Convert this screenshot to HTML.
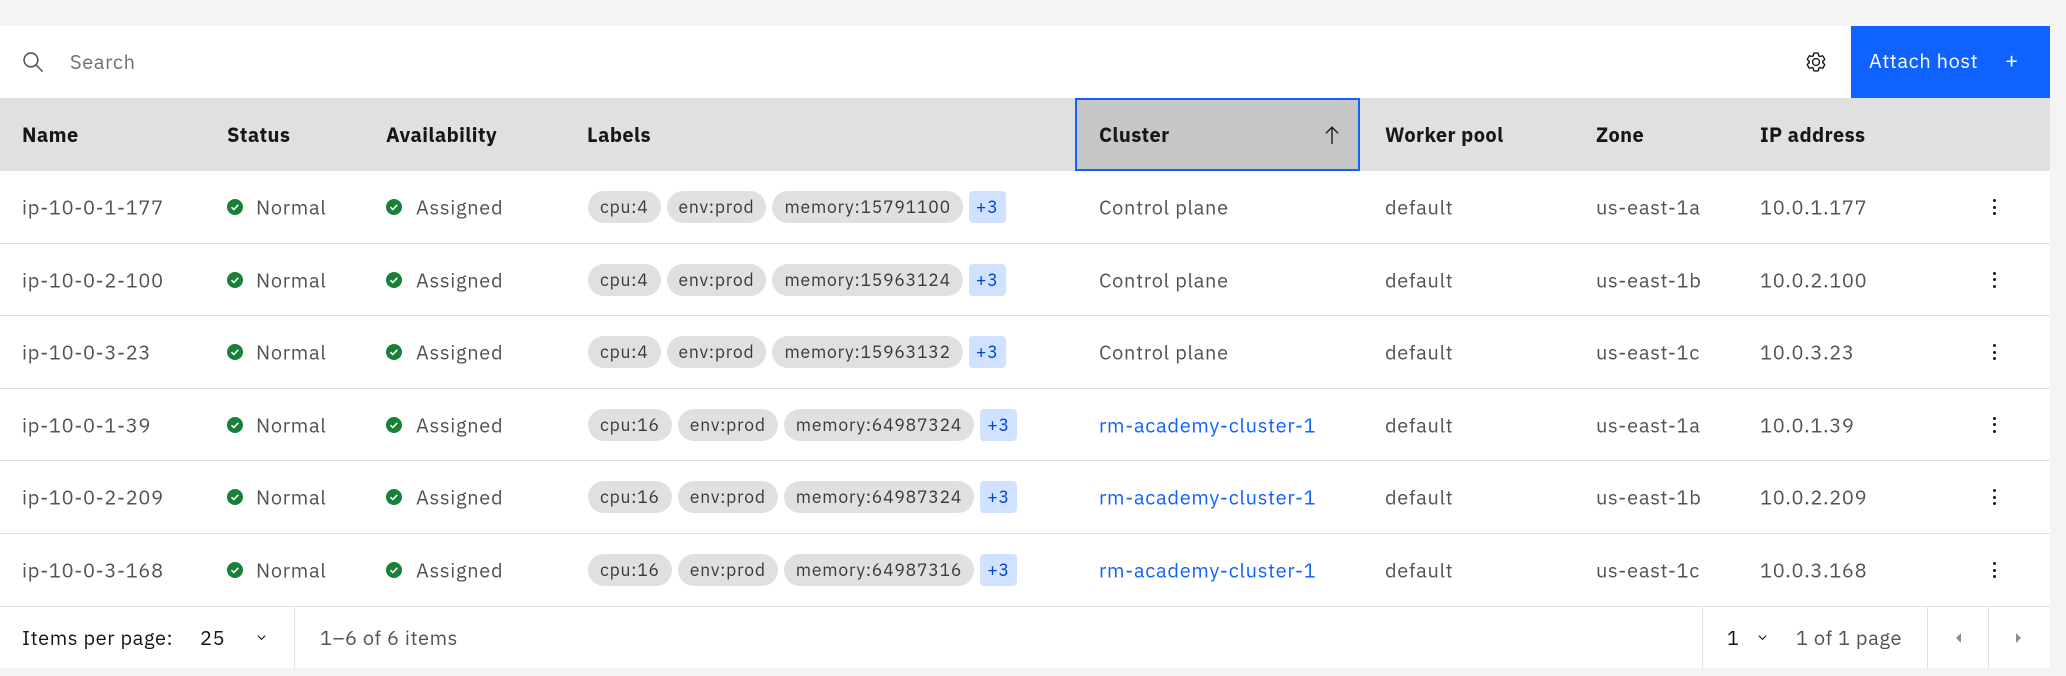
<!DOCTYPE html>
<html><head><meta charset="utf-8"><style>
*{box-sizing:border-box;margin:0;padding:0}
body{width:2066px;height:676px;background:#f4f4f4;font-family:"IBM Plex Sans","Liberation Sans",sans-serif;position:relative;overflow:hidden;color:#525252}
.abs{position:absolute}
.toolbar{left:0;top:26px;width:2050px;height:72px;background:#fff}
.hdr{left:0;top:98px;width:2050px;height:73px;background:#e0e0e0}
.th{position:absolute;top:0;height:73px;line-height:73px;font-size:20px;letter-spacing:0.4px;font-weight:bold;color:#161616}
.row{position:absolute;left:0;width:2050px;background:#fff;border-bottom:1px solid #e0e0e0}
.c{position:absolute;top:50%;transform:translateY(-50%);font-size:20px;letter-spacing:0.7px;white-space:nowrap;color:#525252}
.ok{display:inline-block;width:16px;height:16px;border-radius:50%;background:#198038;position:absolute;top:50%;transform:translateY(-50%)}
.ok svg{position:absolute;left:0;top:0}
.tags{position:absolute;left:588px;top:50%;transform:translateY(-50%);display:flex;gap:6px}
.tag{height:32px;line-height:32px;border-radius:16px;background:#e0e0e0;color:#393939;font-size:17.5px;letter-spacing:0.8px;padding:0 12px;white-space:nowrap}
.more{border-radius:4px;background:#d0e2ff;color:#0043ce;padding:0 7px}
.link{color:#0f62fe}
.kebab{position:absolute;left:1993px;top:50%;transform:translateY(-50%);width:4px;height:16px}
.kebab i{display:block;width:3px;height:3px;border-radius:50%;background:#161616;margin-bottom:3.5px}
.footer{left:0;top:607px;width:2050px;height:61px;background:#fff}
.f{position:absolute;top:0;height:61px;line-height:61px;font-size:20px;letter-spacing:0.6px;white-space:nowrap}
.sep{position:absolute;top:0;width:1px;height:61px;background:#e0e0e0}
</style></head><body>
<div class="abs" style="left:22px;top:-22px;font-size:18.5px;color:#0f62fe;white-space:nowrap">Learn more about your cluster hosts ↗</div>

<div class="abs toolbar">
  <svg class="abs" style="left:22px;top:25px" width="22" height="22" viewBox="0 0 16 16"><circle cx="6.5" cy="6.5" r="5" fill="none" stroke="#525252" stroke-width="1.1"/><path d="M10.2 10.2L15 15" stroke="#525252" stroke-width="1.1"/></svg>
  <div class="abs" style="left:70px;top:0;line-height:72px;font-size:20px;letter-spacing:0.6px;color:#6f6f6f">Search</div>
  <svg class="abs" style="left:1805px;top:25px" width="22" height="22" viewBox="0 0 32 32"><path fill="#161616" d="M27 16.76v-1.53l1.92-1.68A2 2 0 0 0 29.3 11l-2.36-4a2 2 0 0 0-2.37-.9l-2.43.82a11.35 11.35 0 0 0-1.31-.75l-.51-2.52a2 2 0 0 0-2-1.610h-4.68a2 2 0 0 0-2 1.61l-.51 2.52a11.48 11.48 0 0 0-1.32.75l-2.38-.86A2 2 0 0 0 6.79 6a2 2 0 0 0-1.73 1L2.7 11a2 2 0 0 0 .41 2.51L5 15.24v1.53l-1.89 1.68A2 2 0 0 0 2.7 21l2.36 4a2 2 0 0 0 2.37.9l2.43-.82a11.35 11.35 0 0 0 1.31.75l.51 2.52a2 2 0 0 0 2 1.61h4.72a2 2 0 0 0 2-1.61l.51-2.52a11.48 11.48 0 0 0 1.32-.75l2.42.82a2 2 0 0 0 2.37-.9l2.28-4a2 2 0 0 0-.41-2.51ZM25.21 24l-3.43-1.16a8.86 8.86 0 0 1-2.71 1.57L18.36 28h-4.72l-.71-3.55a9.36 9.36 0 0 1-2.7-1.57L6.79 24l-2.36-4 2.72-2.4a8.9 8.9 0 0 1 0-3.13L4.43 12l2.36-4 3.43 1.16a8.86 8.86 0 0 1 2.71-1.57L13.64 4h4.72l.71 3.55a9.36 9.36 0 0 1 2.7 1.57L25.21 8l2.36 4-2.72 2.4a8.9 8.9 0 0 1 0 3.13L27.57 20Z"/><path fill="#161616" d="M16 22a6 6 0 1 1 6-6 5.94 5.94 0 0 1-6 6Zm0-10a3.91 3.91 0 0 0-4 4 3.91 3.91 0 0 0 4 4 3.91 3.91 0 0 0 4-4 3.91 3.91 0 0 0-4-4Z"/></svg>
  <div class="abs" style="left:1851px;top:0;width:199px;height:72px;background:#0f62fe;color:#fff;font-size:20px;letter-spacing:0.6px;line-height:70px;padding-left:18px">Attach host<span style="position:absolute;left:154px;font-size:22px">+</span></div>
</div>

<div class="abs hdr">
  <div class="th" style="left:22px">Name</div>
  <div class="th" style="left:227px">Status</div>
  <div class="th" style="left:386px">Availability</div>
  <div class="th" style="left:587px">Labels</div>
  <div class="abs" style="left:1075px;top:0;width:285px;height:73px;background:#c6c6c6;border:2px solid #0f62fe"></div>
  <div class="th" style="left:1099px">Cluster</div>
  <svg class="abs" style="left:1323px;top:27px" width="18" height="20" viewBox="0 0 16 18"><path d="M8 2v15M2.5 7.5L8 2l5.5 5.5" fill="none" stroke="#161616" stroke-width="1.2"/></svg>
  <div class="th" style="left:1385px">Worker pool</div>
  <div class="th" style="left:1596px">Zone</div>
  <div class="th" style="left:1760px">IP address</div>
</div>

<div class="row" style="top:171px;height:73px">
 <div class="c" style="left:22px">ip-10-0-1-177</div>
 <span class="ok" style="left:227px"><svg width="16" height="16"><path d="M4.5 8.2l2.3 2.3 4.5-4.7" fill="none" stroke="#fff" stroke-width="1.5"/></svg></span><div class="c" style="left:256px">Normal</div>
 <span class="ok" style="left:386px"><svg width="16" height="16"><path d="M4.5 8.2l2.3 2.3 4.5-4.7" fill="none" stroke="#fff" stroke-width="1.5"/></svg></span><div class="c" style="left:416px">Assigned</div>
 <div class="tags"><span class="tag">cpu:4</span><span class="tag">env:prod</span><span class="tag">memory:15791100</span><span class="tag more">+3</span></div>
 <div class="c" style="left:1099px">Control plane</div><div class="c" style="left:1385px">default</div><div class="c" style="left:1596px">us-east-1a</div><div class="c" style="left:1760px">10.0.1.177</div>
 <div class="kebab"><i></i><i></i><i></i></div>
</div>
<div class="row" style="top:244px;height:72px">
 <div class="c" style="left:22px">ip-10-0-2-100</div>
 <span class="ok" style="left:227px"><svg width="16" height="16"><path d="M4.5 8.2l2.3 2.3 4.5-4.7" fill="none" stroke="#fff" stroke-width="1.5"/></svg></span><div class="c" style="left:256px">Normal</div>
 <span class="ok" style="left:386px"><svg width="16" height="16"><path d="M4.5 8.2l2.3 2.3 4.5-4.7" fill="none" stroke="#fff" stroke-width="1.5"/></svg></span><div class="c" style="left:416px">Assigned</div>
 <div class="tags"><span class="tag">cpu:4</span><span class="tag">env:prod</span><span class="tag">memory:15963124</span><span class="tag more">+3</span></div>
 <div class="c" style="left:1099px">Control plane</div><div class="c" style="left:1385px">default</div><div class="c" style="left:1596px">us-east-1b</div><div class="c" style="left:1760px">10.0.2.100</div>
 <div class="kebab"><i></i><i></i><i></i></div>
</div>
<div class="row" style="top:316px;height:73px">
 <div class="c" style="left:22px">ip-10-0-3-23</div>
 <span class="ok" style="left:227px"><svg width="16" height="16"><path d="M4.5 8.2l2.3 2.3 4.5-4.7" fill="none" stroke="#fff" stroke-width="1.5"/></svg></span><div class="c" style="left:256px">Normal</div>
 <span class="ok" style="left:386px"><svg width="16" height="16"><path d="M4.5 8.2l2.3 2.3 4.5-4.7" fill="none" stroke="#fff" stroke-width="1.5"/></svg></span><div class="c" style="left:416px">Assigned</div>
 <div class="tags"><span class="tag">cpu:4</span><span class="tag">env:prod</span><span class="tag">memory:15963132</span><span class="tag more">+3</span></div>
 <div class="c" style="left:1099px">Control plane</div><div class="c" style="left:1385px">default</div><div class="c" style="left:1596px">us-east-1c</div><div class="c" style="left:1760px">10.0.3.23</div>
 <div class="kebab"><i></i><i></i><i></i></div>
</div>
<div class="row" style="top:389px;height:72px">
 <div class="c" style="left:22px">ip-10-0-1-39</div>
 <span class="ok" style="left:227px"><svg width="16" height="16"><path d="M4.5 8.2l2.3 2.3 4.5-4.7" fill="none" stroke="#fff" stroke-width="1.5"/></svg></span><div class="c" style="left:256px">Normal</div>
 <span class="ok" style="left:386px"><svg width="16" height="16"><path d="M4.5 8.2l2.3 2.3 4.5-4.7" fill="none" stroke="#fff" stroke-width="1.5"/></svg></span><div class="c" style="left:416px">Assigned</div>
 <div class="tags"><span class="tag">cpu:16</span><span class="tag">env:prod</span><span class="tag">memory:64987324</span><span class="tag more">+3</span></div>
 <div class="c link" style="left:1099px">rm-academy-cluster-1</div><div class="c" style="left:1385px">default</div><div class="c" style="left:1596px">us-east-1a</div><div class="c" style="left:1760px">10.0.1.39</div>
 <div class="kebab"><i></i><i></i><i></i></div>
</div>
<div class="row" style="top:461px;height:73px">
 <div class="c" style="left:22px">ip-10-0-2-209</div>
 <span class="ok" style="left:227px"><svg width="16" height="16"><path d="M4.5 8.2l2.3 2.3 4.5-4.7" fill="none" stroke="#fff" stroke-width="1.5"/></svg></span><div class="c" style="left:256px">Normal</div>
 <span class="ok" style="left:386px"><svg width="16" height="16"><path d="M4.5 8.2l2.3 2.3 4.5-4.7" fill="none" stroke="#fff" stroke-width="1.5"/></svg></span><div class="c" style="left:416px">Assigned</div>
 <div class="tags"><span class="tag">cpu:16</span><span class="tag">env:prod</span><span class="tag">memory:64987324</span><span class="tag more">+3</span></div>
 <div class="c link" style="left:1099px">rm-academy-cluster-1</div><div class="c" style="left:1385px">default</div><div class="c" style="left:1596px">us-east-1b</div><div class="c" style="left:1760px">10.0.2.209</div>
 <div class="kebab"><i></i><i></i><i></i></div>
</div>
<div class="row" style="top:534px;height:73px">
 <div class="c" style="left:22px">ip-10-0-3-168</div>
 <span class="ok" style="left:227px"><svg width="16" height="16"><path d="M4.5 8.2l2.3 2.3 4.5-4.7" fill="none" stroke="#fff" stroke-width="1.5"/></svg></span><div class="c" style="left:256px">Normal</div>
 <span class="ok" style="left:386px"><svg width="16" height="16"><path d="M4.5 8.2l2.3 2.3 4.5-4.7" fill="none" stroke="#fff" stroke-width="1.5"/></svg></span><div class="c" style="left:416px">Assigned</div>
 <div class="tags"><span class="tag">cpu:16</span><span class="tag">env:prod</span><span class="tag">memory:64987316</span><span class="tag more">+3</span></div>
 <div class="c link" style="left:1099px">rm-academy-cluster-1</div><div class="c" style="left:1385px">default</div><div class="c" style="left:1596px">us-east-1c</div><div class="c" style="left:1760px">10.0.3.168</div>
 <div class="kebab"><i></i><i></i><i></i></div>
</div>

<div class="abs footer">
  <div class="f" style="left:22px;color:#161616">Items per page:</div>
  <div class="f" style="left:200px;color:#161616">25</div>
  <svg class="abs" style="left:256px;top:25px" width="11" height="11" viewBox="0 0 12 12"><path d="M2 4l4 4 4-4" fill="none" stroke="#161616" stroke-width="1.2"/></svg>
  <div class="sep" style="left:294px"></div>
  <div class="f" style="left:320px">1–6 of 6 items</div>
  <div class="sep" style="left:1702px"></div>
  <div class="f" style="left:1727px;color:#161616">1</div>
  <svg class="abs" style="left:1757px;top:25px" width="11" height="11" viewBox="0 0 12 12"><path d="M2 4l4 4 4-4" fill="none" stroke="#161616" stroke-width="1.2"/></svg>
  <div class="f" style="left:1796px">1 of 1 page</div>
  <div class="sep" style="left:1927px"></div>
  <svg class="abs" style="left:1953px;top:24px" width="10" height="14"><path d="M8 2L3 7l5 5z" fill="#8d8d8d"/></svg>
  <div class="sep" style="left:1988px"></div>
  <svg class="abs" style="left:2014px;top:24px" width="10" height="14"><path d="M2 2l5 5-5 5z" fill="#8d8d8d"/></svg>
</div>
</body></html>
